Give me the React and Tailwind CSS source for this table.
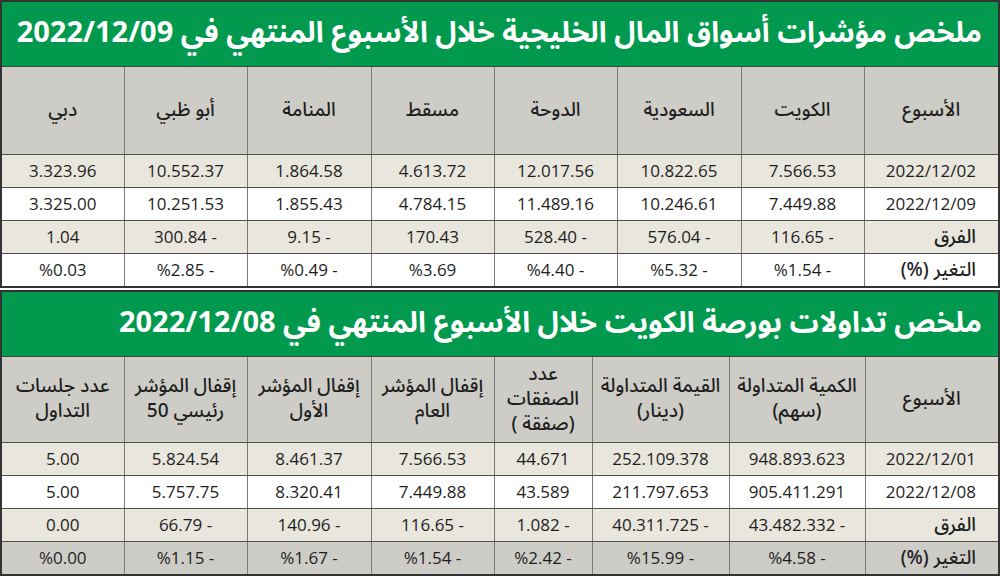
import React from "react";

const AR = { fontFamily: '"Noto Sans Arabic", "DejaVu Sans", sans-serif' };
const NUM = { fontFamily: '"Open Sans", "DejaVu Sans", sans-serif' };

const t1Cols = [136, 123, 124, 123, 123, 124, 123, 124];
const t1Head = ["الأسبوع", "الكويت", "السعودية", "الدوحة", "مسقط", "المنامة", "أبو ظبي", "دبي"];
const t1Rows = [
  { bg: "bg-[#e8e6dd]", label: "2022/12/02", num: true, cells: ["7.566.53", "10.822.65", "12.017.56", "4.613.72", "1.864.58", "10.552.37", "3.323.96"] },
  { bg: "bg-white", label: "2022/12/09", num: true, cells: ["7.449.88", "10.246.61", "11.489.16", "4.784.15", "1.855.43", "10.251.53", "3.325.00"] },
  { bg: "bg-[#e8e6dd]", label: "الفرق", cells: ["116.65 -", "576.04 -", "528.40 -", "170.43", "9.15 -", "300.84 -", "1.04"] },
  { bg: "bg-white", label: "التغير (%)", cells: ["%1.54 -", "%5.32 -", "%4.40 -", "%3.69", "%0.49 -", "%2.85 -", "%0.03"] },
];

const t2Cols = [135, 136, 137, 98, 123, 124, 123, 124];
const t2Head = [
  ["الأسبوع"],
  ["الكمية المتداولة", "(سهم)"],
  ["القيمة المتداولة", "(دينار)"],
  ["عدد", "الصفقات", "(صفقة )"],
  ["إقفال المؤشر", "العام"],
  ["إقفال المؤشر", "الأول"],
  ["إقفال المؤشر", "رئيسي 50"],
  ["عدد جلسات", "التداول"],
];
const t2Rows = [
  { bg: "bg-[#e8e6dd]", label: "2022/12/01", num: true, cells: ["948.893.623", "252.109.378", "44.671", "7.566.53", "8.461.37", "5.824.54", "5.00"] },
  { bg: "bg-white", label: "2022/12/08", num: true, cells: ["905.411.291", "211.797.653", "43.589", "7.449.88", "8.320.41", "5.757.75", "5.00"] },
  { bg: "bg-[#e8e6dd]", label: "الفرق", cells: ["43.482.332 -", "40.311.725 -", "1.082 -", "116.65 -", "140.96 -", "66.79 -", "0.00"] },
  { bg: "bg-[#cdccc6]", label: "التغير (%)", cells: ["%4.58 -", "%15.99 -", "%2.42 -", "%1.54 -", "%1.67 -", "%1.15 -", "%0.00"] },
];

function Title({ children }) {
  return (
    <div className="h-[65px] bg-[#00994d] flex items-center justify-start pr-[16px] pl-[14px] border-b border-[#3a4a3f]">
      <div className="text-white font-bold text-[29px] whitespace-nowrap leading-none pb-[4px]" style={AR}>
        {children}
      </div>
    </div>
  );
}

function DataRow({ row, last }) {
  return (
    <tr className={`${row.bg} h-[33px]`}>
      <td className={`border-l border-[#7a7a77] ${last ? "" : "border-b"} border-b-[#4f4f4c] text-right pr-[22px] text-[#1e1e1e] p-0 leading-[22px]`}>
        {row.num ? (
          <span className="text-[17px] leading-[22px]" style={NUM} dir="ltr">{row.label}</span>
        ) : (
          <span className="text-[19px] font-medium leading-[22px]" style={AR}>{row.label}</span>
        )}
      </td>
      {row.cells.map((c, i) => (
        <td
          key={i}
          className={`${i < row.cells.length - 1 ? "border-l" : ""} border-[#7a7a77] ${last ? "" : "border-b"} border-b-[#4f4f4c] text-center text-[#1e1e1e] text-[17px] leading-[22px] p-0`}
          style={NUM}
        >
          <span dir="ltr">{c}</span>
        </td>
      ))}
    </tr>
  );
}

function Table1() {
  return (
    <div className="border-2 border-[#333]">
      <Title>ملخص مؤشرات أسواق المال الخليجية خلال الأسبوع المنتهي في 2022/12/09</Title>
      <table className="w-full table-fixed border-collapse">
        <colgroup>
          {t1Cols.map((w, i) => (
            <col key={i} style={{ width: w - (i === 0 || i === 7 ? 2 : 0) }} />
          ))}
        </colgroup>
        <tbody>
          <tr className="h-[87px] bg-[#cdccc6]">
            {t1Head.map((h, i) => (
              <td
                key={i}
                className={`${i < 7 ? "border-l" : ""} border-[#7a7a77] border-b border-b-[#4f4f4c] text-center text-[19px] font-medium text-[#1e1e1e] p-0`}
                style={AR}
              >
                {h}
              </td>
            ))}
          </tr>
          {t1Rows.map((r, i) => (
            <DataRow key={i} row={r} last={i === t1Rows.length - 1} />
          ))}
        </tbody>
      </table>
    </div>
  );
}

function Table2() {
  return (
    <div className="border-2 border-[#333]">
      <Title>ملخص تداولات بورصة الكويت خلال الأسبوع المنتهي في 2022/12/08</Title>
      <table className="w-full table-fixed border-collapse">
        <colgroup>
          {t2Cols.map((w, i) => (
            <col key={i} style={{ width: w - (i === 0 || i === 7 ? 2 : 0) }} />
          ))}
        </colgroup>
        <tbody>
          <tr className="h-[85px] bg-[#cdccc6]">
            {t2Head.map((h, i) => (
              <td
                key={i}
                className={`${i < 7 ? "border-l" : ""} border-[#7a7a77] border-b border-b-[#4f4f4c] text-center text-[19px] font-medium leading-[25px] text-[#1e1e1e] p-0`}
                style={AR}
              >
                {h.map((line, j) => (
                  <div key={j} className="whitespace-nowrap">{line}</div>
                ))}
              </td>
            ))}
          </tr>
          {t2Rows.map((r, i) => (
            <DataRow key={i} row={r} last={i === t2Rows.length - 1} />
          ))}
        </tbody>
      </table>
    </div>
  );
}

export default function App() {
  return (
    <div dir="rtl" className="w-[1000px] h-[577px] bg-white overflow-hidden flex flex-col gap-[2px]">
      <Table1 />
      <Table2 />
    </div>
  );
}
